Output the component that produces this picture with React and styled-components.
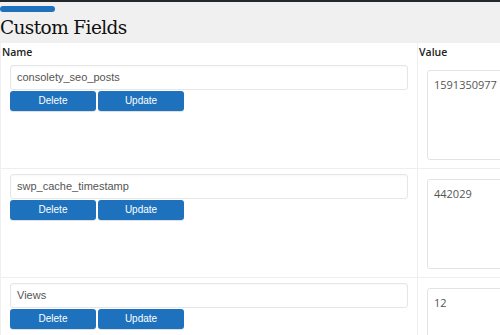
import React from "react";
import styled, { createGlobalStyle } from "styled-components";

const Global = createGlobalStyle`
  html, body { margin: 0; padding: 0; background: #fff; overflow: hidden; }
  body { width: 500px; height: 335px; }
  * { box-sizing: border-box; }
`;

const Page = styled.div`
  width: 500px;
  border-top: 2px solid #23282d;
  overflow: hidden;
`;

const Header = styled.div`
  background: #f0f0f0;
  height: 41px;
  padding-top: 4px;
`;

const Accent = styled.div`
  width: 55px;
  height: 6px;
  background: #1e72bd;
  border-radius: 3px;
`;

const Title = styled.h1`
  margin: 4px 0 0 0;
  font-family: "DejaVu Serif", "Liberation Serif", serif;
  font-weight: 400;
  font-size: 18.5px;
  line-height: 24px;
  color: #111;
  letter-spacing: -0.6px;
`;

const Table = styled.div`
  width: 700px;
  border-left: 1px solid #f0f0f0;
`;

const Row = styled.div`
  display: grid;
  grid-template-columns: 416px 1fr;
  border-bottom: ${(p) => (p.$head ? "none" : "1px solid #eeeeee")};
`;

const HeadCell = styled.div`
  font-family: "Open Sans", sans-serif;
  font-weight: 600;
  font-size: 10.5px;
  color: #222;
  height: 17px;
  line-height: 16px;
  padding-left: 1px;
  padding-top: 1px;
`;

const NameCell = styled.div`
  padding: 5px 0 0 9px;
`;

const ValueCell = styled.div`
  border-left: 1px solid #eeeeee;
  padding: ${(p) => (p.$head ? "0" : "10px 0 8px 9px")};
`;

const KeyInput = styled.div`
  width: 398px;
  height: 25px;
  border: 1px solid #e6e6e6;
  border-radius: 3px;
  padding-left: 6px;
  font-family: "Liberation Sans", Arial, sans-serif;
  font-size: 11px;
  line-height: 23px;
  color: #555;
  box-shadow: inset 0 1px 2px rgba(0,0,0,0.03);
`;

const Buttons = styled.div`
  display: flex;
  gap: 2px;
  margin-top: 1px;
`;

const Button = styled.button`
  width: 86px;
  height: 20px;
  border: none;
  border-radius: 3px;
  background: #1e72bd;
  color: #fff;
  font-family: "Liberation Sans", Arial, sans-serif;
  font-size: 10px;
  padding: 0;
  line-height: 20px;
  box-shadow: 0 1px 0 rgba(0,0,0,0.12);
`;

const ValueBox = styled.div`
  width: 220px;
  height: 90px;
  border: 1px solid #e3e3e3;
  border-radius: 3px;
  padding: 7px 0 0 6px;
  font-family: "Open Sans", sans-serif;
  font-size: 11px;
  line-height: 14px;
  color: #555;
`;

const fields = [
  { name: "consolety_seo_posts", value: "1591350977" },
  { name: "swp_cache_timestamp", value: "442029" },
  { name: "Views", value: "12" },
];

export default function App() {
  return (
    <Page>
      <Global />
      <Header>
        <Accent />
        <Title>Custom Fields</Title>
      </Header>
      <Table>
        <Row $head>
          <HeadCell>Name</HeadCell>
          <ValueCell $head>
            <HeadCell>Value</HeadCell>
          </ValueCell>
        </Row>
        {fields.map((f) => (
          <Row key={f.name}>
            <NameCell>
              <KeyInput>{f.name}</KeyInput>
              <Buttons>
                <Button>Delete</Button>
                <Button>Update</Button>
              </Buttons>
            </NameCell>
            <ValueCell>
              <ValueBox>{f.value}</ValueBox>
            </ValueCell>
          </Row>
        ))}
      </Table>
    </Page>
  );
}
